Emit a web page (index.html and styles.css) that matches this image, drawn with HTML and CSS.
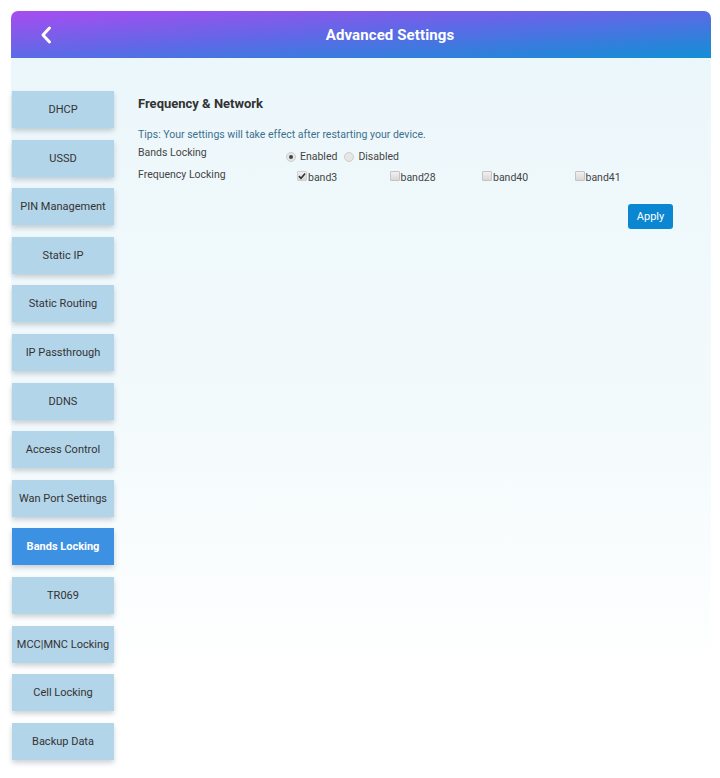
FILE: index.html
```html
<!DOCTYPE html>
<html>
<head>
<meta charset="utf-8">
<link rel="stylesheet" href="styles.css">
</head>
<body>
<div class="page">
  <header class="topbar">
    <span class="back">
      <svg width="14" height="20" viewBox="0 0 14 20"><path d="M10.5 3 L4 10 L10.5 17" fill="none" stroke="#fff" stroke-width="3" stroke-linecap="round" stroke-linejoin="round"/></svg>
    </span>
    <h1 class="title">Advanced Settings</h1>
  </header>
  <div class="panel">
    <nav class="sidebar">
      <div class="nav-btn">DHCP</div>
      <div class="nav-btn">USSD</div>
      <div class="nav-btn">PIN Management</div>
      <div class="nav-btn">Static IP</div>
      <div class="nav-btn">Static Routing</div>
      <div class="nav-btn">IP Passthrough</div>
      <div class="nav-btn">DDNS</div>
      <div class="nav-btn">Access Control</div>
      <div class="nav-btn">Wan Port Settings</div>
      <div class="nav-btn active">Bands Locking</div>
      <div class="nav-btn">TR069</div>
      <div class="nav-btn">MCC|MNC Locking</div>
      <div class="nav-btn">Cell Locking</div>
      <div class="nav-btn">Backup Data</div>
    </nav>
    <main class="content">
      <h2 class="section-title">Frequency &amp; Network</h2>
      <p class="tips">Tips: Your settings will take effect after restarting your device.</p>
      <div class="row">
        <span class="label">Bands Locking</span>
        <div class="options radios">
          <span class="opt"><span class="radio checked"></span>Enabled</span>
          <span class="opt"><span class="radio"></span>Disabled</span>
        </div>
      </div>
      <div class="row">
        <span class="label">Frequency Locking</span>
        <div class="options checks">
          <span class="opt band"><span class="check checked"><svg width="9" height="8" viewBox="0 0 9 8"><path d="M1 4.2 L3.4 6.6 L8 1.2" fill="none" stroke="#333" stroke-width="1.8"/></svg></span>band3</span>
          <span class="opt band"><span class="check"></span>band28</span>
          <span class="opt band"><span class="check"></span>band40</span>
          <span class="opt band"><span class="check"></span>band41</span>
        </div>
      </div>
      <div class="actions">
        <button class="apply">Apply</button>
      </div>
    </main>
  </div>
</div>
</body>
</html>
```
FILE: styles.css
```css
* { box-sizing: border-box; }
html, body { margin: 0; padding: 0; background: #fff; }
body { font-family: Roboto, "Noto Sans", sans-serif; color: #333; }
.page { padding: 11px 9px 0 11px; width: 720px; }
.topbar {
  height: 47px;
  border-radius: 7px 7px 0 0;
  background: linear-gradient(to bottom right, #a84cf0 0%, #5b6ae6 50%, #1190d4 100%);
  display: flex;
  align-items: center;
}
.back { width: 14px; height: 20px; margin-left: 28px; display: flex; }
.title {
  margin: 0;
  flex: 1;
  text-align: center;
  color: #fff;
  font-size: 15px;
  font-weight: 700;
  padding-left: 16px;
  letter-spacing: 0.1px;
}
.panel {
  display: flex;
  background: linear-gradient(180deg, #ecf7fb 0%, #f3fafc 50%, #ffffff 85%);
  padding: 33px 0 10px 1px;
  min-height: 720px;
}
.sidebar { width: 102px; display: flex; flex-direction: column; gap: 11.6px; }
.nav-btn {
  height: 37px;
  background: #b3d5e9;
  color: #333;
  font-size: 11px;
  font-weight: 400;
  display: flex;
  align-items: center;
  justify-content: center;
  box-shadow: 0 3px 5px rgba(60, 80, 100, 0.25);
  white-space: nowrap;
}
.nav-btn.active { background: #3d91e3; color: #fff; font-weight: 700; }
.content { flex: 1; padding: 5px 38px 0 24px; }
.section-title { margin: 0; font-size: 13px; font-weight: 700; color: #333; line-height: 16px; }
.tips { margin: 16px 0 0; font-size: 10.5px; color: #3d6f8e; line-height: 14px; }
.row { display: flex; align-items: flex-start; font-size: 10.5px; color: #444; line-height: 14px; margin-top: 4px; }
.row + .row { margin-top: 4px; }
.label { width: 148px; }
.options { display: flex; align-items: center; }
.radios { margin-top: 4px; gap: 7px; }
.checks { margin-top: 3px; margin-left: 11px; }
.opt { display: flex; align-items: center; color: #444; }
.band { width: 92.5px; }
.radio {
  width: 10px; height: 10px; border-radius: 50%;
  background: #e6e6e6; border: 1px solid #cfcfcf;
  margin-right: 4px; display: flex; align-items: center; justify-content: center;
}
.radio.checked::after { content: ""; width: 4px; height: 4px; border-radius: 50%; background: #444; }
.check {
  width: 10px; height: 10px;
  background: linear-gradient(180deg, #f0f0f0, #d8d8d8);
  border: 1px solid #c4c4c4; border-radius: 1px;
  margin-right: 1px; display: flex; align-items: center; justify-content: center;
  position: relative; top: -2px;
}
.check.checked { border-color: #d0d0d0; }
.actions { display: flex; justify-content: flex-end; margin-top: 19px; }
.apply {
  width: 45px; height: 25px;
  background: #0a87d0; color: #fff; border: none; border-radius: 3px;
  font-family: Roboto, sans-serif; font-size: 11px; padding: 0;
}
```
